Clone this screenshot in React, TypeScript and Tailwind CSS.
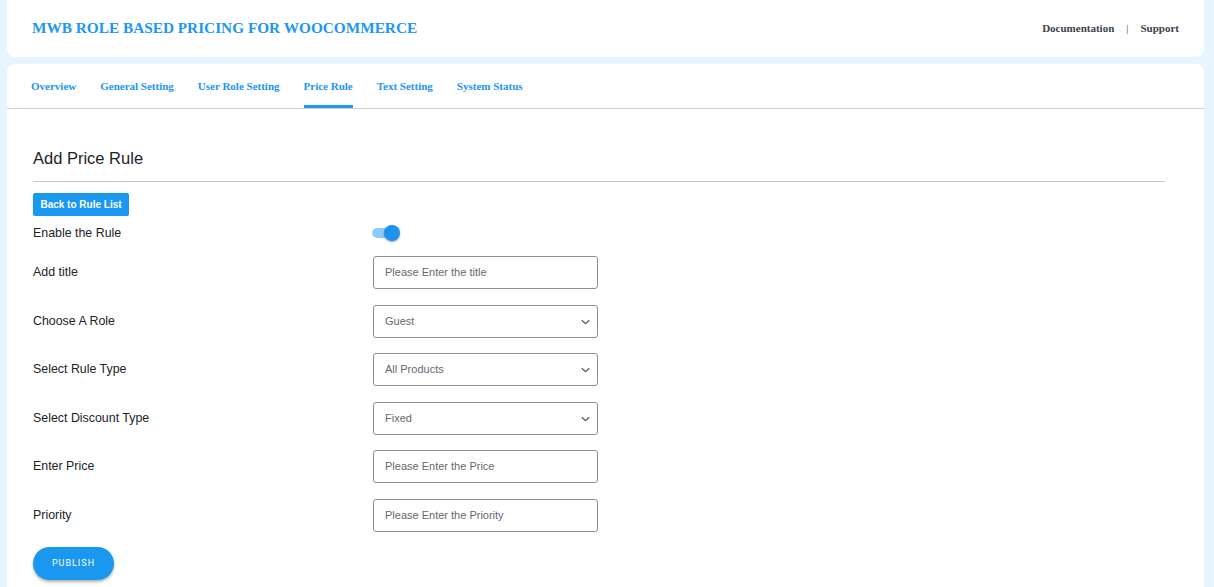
const TABS = [
  "Overview",
  "General Setting",
  "User Role Setting",
  "Price Rule",
  "Text Setting",
  "System Status",
];

function Chevron() {
  return (
    <svg width="9" height="5" viewBox="0 0 9 5" className="absolute right-[7px] top-1/2 -translate-y-1/2">
      <path d="M0.8 0.8l3.7 3.4 3.7-3.4" fill="none" stroke="#50575e" strokeWidth="1.2" />
    </svg>
  );
}

function Field({ label, placeholder, select, mt }: { label: string; placeholder: string; select?: boolean; mt: string }) {
  return (
    <div className={`flex items-center ${mt}`}>
      <div className="w-[340px] text-[12.4px] text-[#1d2327]">{label}</div>
      <div className="relative w-[225px] h-[33px] rounded-[3px] border border-[#8c8f94] flex items-center px-[11px] text-[11px] text-[#646970] bg-white">
        {placeholder}
        {select && <Chevron />}
      </div>
    </div>
  );
}

export default function App() {
  return (
    <div className="h-[587px] overflow-hidden bg-[#e8f4fe] pl-[7px] pr-[10px]" style={{ fontFamily: '"Liberation Sans", Arial, sans-serif' }}>
      <div className="bg-white rounded-b-[8px] h-[57px] flex items-center justify-between pl-[25px] pr-[25px]">
        <div className="text-[15.3px] font-bold text-[#2196f3]" style={{ fontFamily: '"Liberation Serif", serif' }}>
          MWB ROLE BASED PRICING FOR WOOCOMMERCE
        </div>
        <div className="flex items-center text-[11px] font-bold text-[#3c434a]" style={{ fontFamily: '"Liberation Serif", serif' }}>
          <span>Documentation</span>
          <span className="mx-[12px] font-normal">|</span>
          <span>Support</span>
        </div>
      </div>

      <div className="bg-white rounded-t-[8px] mt-[7px] h-[600px]">
        <div className="flex h-[45px] border-b border-[#cfcfcf] pl-[24px] gap-[24px]" style={{ fontFamily: '"Liberation Serif", serif' }}>
          {TABS.map((t) => (
            <div
              key={t}
              className={`flex items-center text-[11px] font-bold text-[#2196f3] ${t === "Price Rule" ? "border-b-[3px] border-[#2196f3] pt-[3px]" : ""}`}
            >
              {t}
            </div>
          ))}
        </div>

        <div className="pl-[26px] pr-[39px]">
          <h2 className="text-[16.5px] text-[#1d2327] mt-[39px] leading-[20px]">Add Price Rule</h2>
          <div className="border-t border-[#c9c9c9] mt-[13px]" />
          <button className="mt-[11px] h-[23px] w-[96px] rounded-[2px] bg-[#1a98ef] text-white text-[10px] font-bold">
            Back to Rule List
          </button>
          <div className="flex items-center mt-[7px] h-[20px]">
            <div className="w-[339px] text-[12.4px] text-[#1d2327]">Enable the Rule</div>
            <div className="relative w-[28px] h-[16px] flex items-center">
              <div className="w-[24px] h-[10px] rounded-full bg-[#8ccbfa]" />
              <div className="absolute right-0 top-0 w-[16px] h-[16px] rounded-full bg-[#1e93ee] shadow-[0_1px_2px_rgba(0,0,0,0.35)]" />
            </div>
          </div>
          <Field label="Add title" placeholder="Please Enter the title" mt="mt-[13px]" />
          <Field label="Choose A Role" placeholder="Guest" select mt="mt-[16px]" />
          <Field label="Select Rule Type" placeholder="All Products" select mt="mt-[15px]" />
          <Field label="Select Discount Type" placeholder="Fixed" select mt="mt-[16px]" />
          <Field label="Enter Price" placeholder="Please Enter the Price" mt="mt-[15px]" />
          <Field label="Priority" placeholder="Please Enter the Priority" mt="mt-[16px]" />
          <button className="mt-[15px] h-[33px] w-[81px] rounded-full bg-[#1a98ef] text-white text-[9px] tracking-[1px] shadow-[0_2px_3px_rgba(0,0,0,0.3)]" style={{ fontFamily: 'Roboto, "Liberation Sans", sans-serif' }}>
            PUBLISH
          </button>
        </div>
      </div>
    </div>
  );
}
